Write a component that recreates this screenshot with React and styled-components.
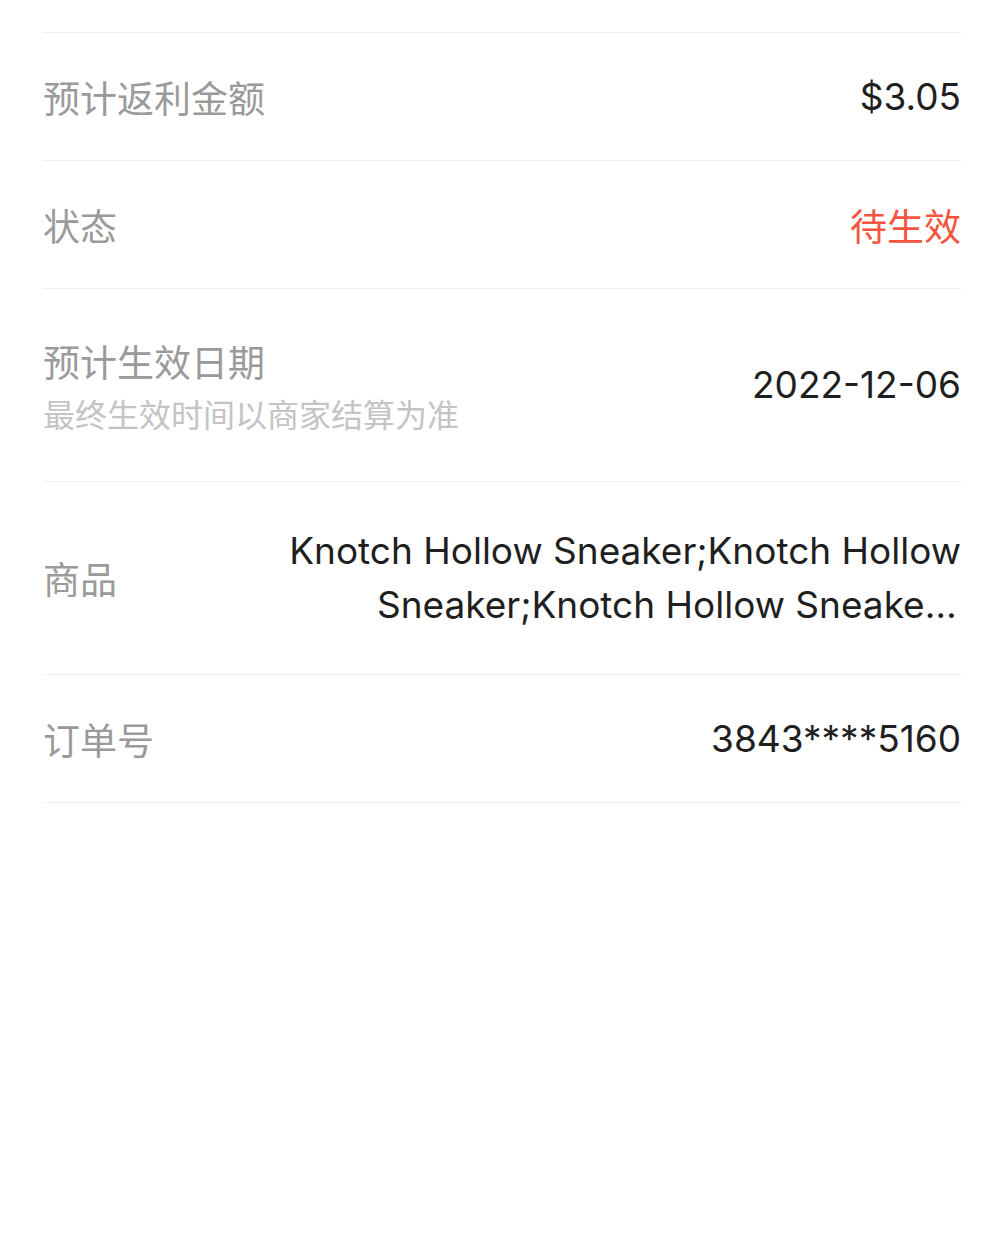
import React from 'react'
import styled, { createGlobalStyle } from 'styled-components'

const GlobalStyle = createGlobalStyle`
    html, body {
        margin: 0;
        padding: 0;
        background: #fff;
    }
    body {
        font-family: Inter, "Noto Sans CJK SC", sans-serif;
        -webkit-font-smoothing: antialiased;
    }
`

const List = styled.div`
    padding: 32px 44px 0 43px;
`

const Row = styled.div`
    display: flex;
    align-items: center;
    justify-content: space-between;
    gap: 40px;
    min-height: ${props => props.tall ? 192 : 127}px;
    border-top: 1px solid #efefef;
    &:last-child {
        border-bottom: 1px solid #efefef;
    }
`

const LabelBlock = styled.div`
    display: flex;
    flex-direction: column;
    flex-shrink: 0;
`

const Label = styled.div`
    font-family: "Noto Sans CJK SC", sans-serif;
    font-size: 37px;
    line-height: 52px;
    color: #9a9a9a;
    flex-shrink: 0;
`

const Hint = styled.div`
    font-family: "Noto Sans CJK SC", sans-serif;
    font-size: 32px;
    line-height: 44px;
    margin-top: 4px;
    color: #c4c4c4;
`

const Value = styled.div`
    font-size: 37px;
    line-height: 54px;
    color: ${props => props.accent ? '#f4553e' : '#1f1f1f'};
    text-align: right;
    font-family: ${props => props.cjk ? '"Noto Sans CJK SC", sans-serif' : 'Inter, "Noto Sans CJK SC", sans-serif'};
`

const Product = styled(Value)`
    display: flex;
    flex-direction: column;
    align-items: flex-end;
    min-width: 0;
`

// second line is cut with a tail ellipsis
const ProductLine = styled.div`
    white-space: nowrap;
    overflow: hidden;
    text-overflow: ellipsis;
    max-width: ${props => props.cut ? '590px' : 'none'};
    margin-right: ${props => props.cut ? '-6px' : '0'};
`

const App = () => (
    <>
        <GlobalStyle />
        <List>
            <Row>
                <Label>预计返利金额</Label>
                <Value>$3.05</Value>
            </Row>
            <Row>
                <Label>状态</Label>
                <Value cjk accent>待生效</Value>
            </Row>
            <Row tall>
                <LabelBlock>
                    <Label>预计生效日期</Label>
                    <Hint>最终生效时间以商家结算为准</Hint>
                </LabelBlock>
                <Value>2022-12-06</Value>
            </Row>
            <Row tall>
                <Label>商品</Label>
                <Product>
                    <ProductLine>Knotch Hollow Sneaker;Knotch Hollow</ProductLine>
                    <ProductLine cut>Sneaker;Knotch Hollow Sneaker;Knotch Hollow Sneaker</ProductLine>
                </Product>
            </Row>
            <Row>
                <Label>订单号</Label>
                <Value>3843****5160</Value>
            </Row>
        </List>
    </>
)

export default App
